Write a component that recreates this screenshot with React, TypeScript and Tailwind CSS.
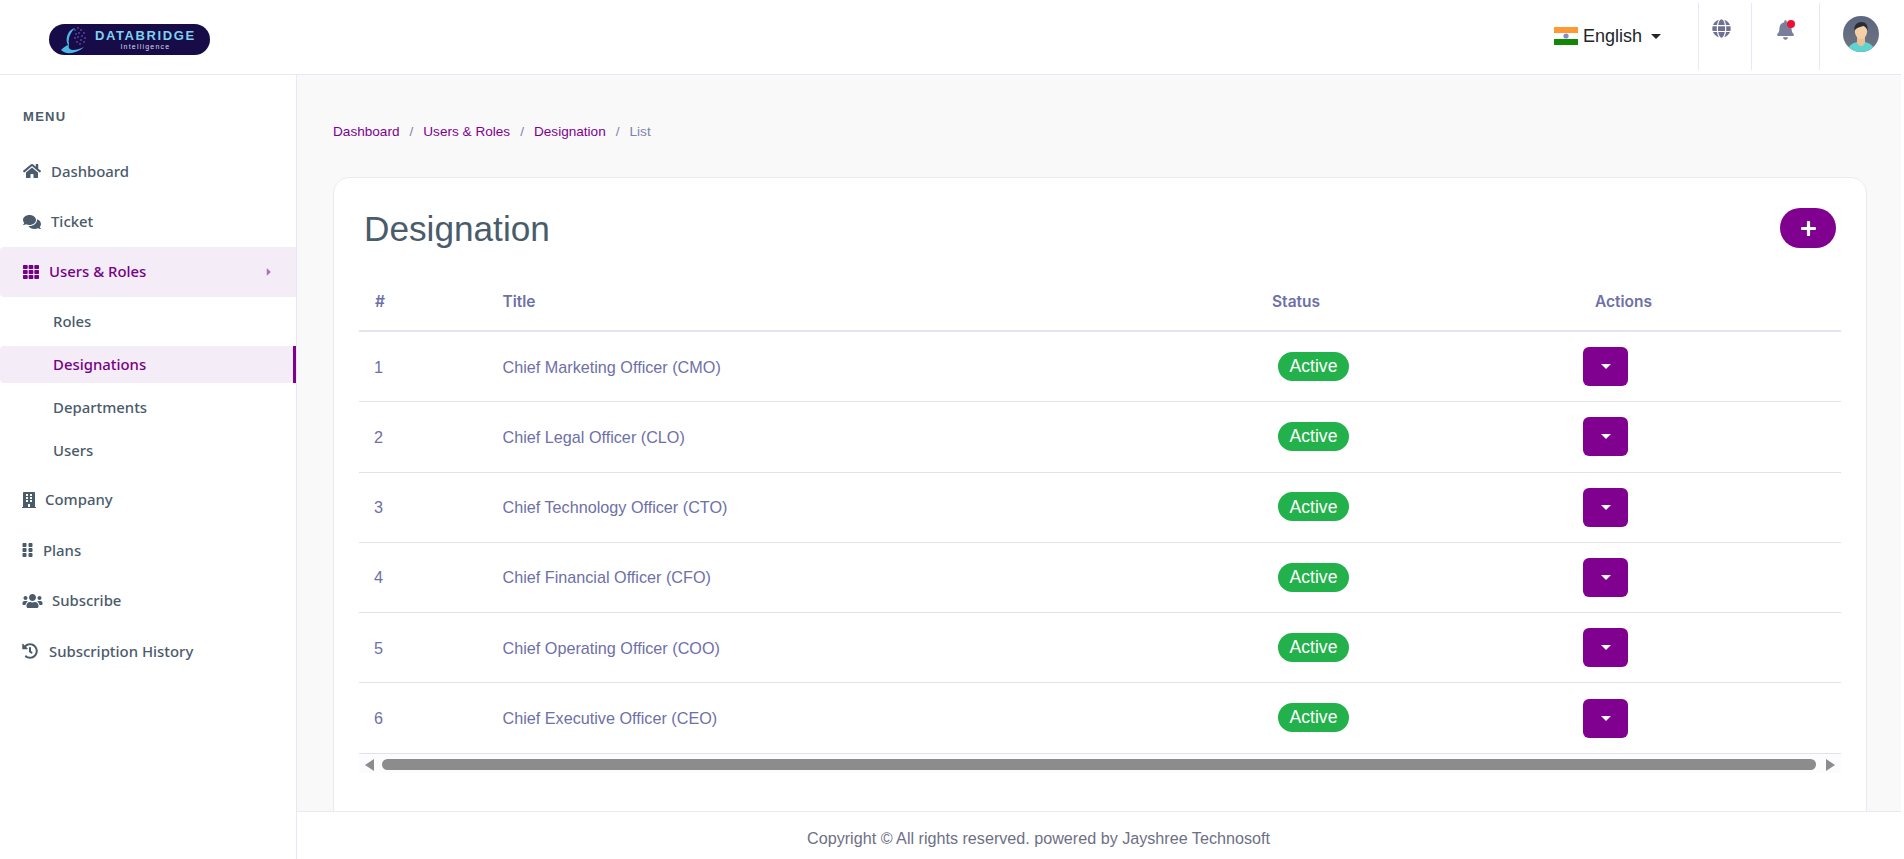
import React from "react";
import { FaHome, FaComments, FaTh, FaBuilding, FaGripVertical, FaUsers, FaHistory, FaGlobe, FaBell, FaPlus, FaCaretRight } from "react-icons/fa";

const rows = [
  "Chief Marketing Officer (CMO)",
  "Chief Legal Officer (CLO)",
  "Chief Technology Officer (CTO)",
  "Chief Financial Officer (CFO)",
  "Chief Operating Officer (COO)",
  "Chief Executive Officer (CEO)",
];

function Logo() {
  return (
    <div className="relative mt-[24px] flex h-[31px] w-[161px] items-center rounded-full bg-[#170c47]">
      <svg viewBox="0 0 30 31" className="ml-[11px] h-[31px] w-[30px] shrink-0">
        <path d="M1 26c4 5 16 4 23-3-6 3-12 4-14 2-2-1-1-4-1-6-1-1 0-3 0-5 1-4 3-7 6-10-4 1-7 4-8 9-1 3 0 6 1 8-3 1-5 3-7 5z" fill="#4fb6e8" />
        <g fill="#7f6fd8">
          <circle cx="15" cy="6" r=".8" /><circle cx="18" cy="4" r=".8" /><circle cx="21" cy="6" r=".8" /><circle cx="24" cy="9" r=".8" />
          <circle cx="16" cy="10" r=".8" /><circle cx="19" cy="9" r=".8" /><circle cx="22" cy="12" r=".8" /><circle cx="25" cy="14" r=".8" />
          <circle cx="15" cy="14" r=".8" /><circle cx="18" cy="13" r=".8" /><circle cx="21" cy="16" r=".8" /><circle cx="24" cy="18" r=".8" />
          <circle cx="17" cy="18" r=".8" /><circle cx="20" cy="20" r=".8" />
        </g>
      </svg>
      <div className="ml-[5px] flex flex-col items-center font-['Liberation_Sans',sans-serif] leading-none">
        <span className="text-[13px] font-bold leading-[13px] tracking-[1.6px] text-[#7dd3f0]">DATABRIDGE</span>
        <span className="mt-[1px] text-[7px] leading-[8px] tracking-[1.2px] text-[#d8d8f0]">Intelligence</span>
      </div>
    </div>
  );
}

function Flag() {
  return (
    <svg viewBox="0 0 24 18" className="h-[18px] w-[24px]">
      <rect width="24" height="6" fill="#ff9933" />
      <rect y="6" width="24" height="6" fill="#ffffff" />
      <rect y="12" width="24" height="6" fill="#138808" />
      <circle cx="12" cy="9" r="2.6" fill="#8a8ac8" />
    </svg>
  );
}

function Avatar() {
  return (
    <svg viewBox="0 0 36 36" className="h-[36px] w-[36px]">
      <defs>
        <clipPath id="av"><circle cx="18" cy="18" r="18" /></clipPath>
        <linearGradient id="avg" x1="0" y1="0" x2="0" y2="1">
          <stop offset="0" stopColor="#5c6880" />
          <stop offset="1" stopColor="#6f7480" />
        </linearGradient>
      </defs>
      <g clipPath="url(#av)">
        <rect width="36" height="36" fill="url(#avg)" />
        <path d="M4 36c1-7 6-9 10-10h8c4 1 9 3 10 10z" fill="#5fd3cf" />
        <path d="M14 21h8v5c0 2-2 4-4 4s-4-2-4-4z" fill="#eec09a" />
        <ellipse cx="18" cy="15" rx="6.2" ry="8" fill="#f5cfa8" />
        <path d="M11.500 15c-1-6 3-9 7-9s7 3 6 9c-1-3-2-4-4-5-3 1-7 1-9 5z" fill="#2b2b33" />
      </g>
    </svg>
  );
}

function Item({ icon, label, gap, active }: { icon: React.ReactNode; label: string; gap: string; active?: boolean }) {
  return (
    <div className={active ? "flex h-[50px] items-center rounded-l-[4px] bg-[#f4ecf6] pl-[23px] pr-[24px] text-[#750085]" : "flex h-[50.4px] items-center pl-[23px] text-[#4a5b6b]"}>
      {icon}
      <span className={gap + " pb-[1px]"}>{label}</span>
      {active && <FaCaretRight className="ml-auto h-[12px] w-[6px] text-[#b26ec4]" />}
    </div>
  );
}

function Sidebar() {
  return (
    <aside className="w-[297px] shrink-0 border-r border-[#e9e6f5] bg-white font-['Noto_Sans',sans-serif] text-[14.900px] font-medium leading-[20px]">
      <div className="flex h-[71px] items-end pb-[21px] pl-[23px] font-['Liberation_Sans',sans-serif] text-[13px] font-bold leading-[16px] tracking-[1.3px] text-[#4a5b6b]">MENU</div>
      <Item icon={<FaHome className="h-[18px] w-[18px]" />} label="Dashboard" gap="ml-[10px]" />
      <Item icon={<FaComments className="h-[18px] w-[18px]" />} label="Ticket" gap="ml-[10px]" />
      <Item icon={<FaTh className="h-[16px] w-[16px]" />} label="Users & Roles" gap="ml-[10px]" active />
      <div className="flex flex-col gap-[6px] pb-[6px] pt-[6px]">
        <div className="flex h-[37px] items-center pb-[1px] pl-[53px] text-[#4a5b6b]">Roles</div>
        <div className="flex h-[37px] items-center rounded-l-[4px] border-r-[3px] border-[#800090] bg-[#f4ecf6] pb-[1px] pl-[53px] text-[#750085]">Designations</div>
        <div className="flex h-[37px] items-center pb-[1px] pl-[53px] text-[#4a5b6b]">Departments</div>
        <div className="flex h-[37px] items-center pb-[1px] pl-[53px] text-[#4a5b6b]">Users</div>
      </div>
      <Item icon={<FaBuilding className="-ml-[1px] h-[16px] w-[14px]" />} label="Company" gap="ml-[9px]" />
      <Item icon={<FaGripVertical className="-ml-[1px] h-[16px] w-[11px]" />} label="Plans" gap="ml-[10px]" />
      <Item icon={<FaUsers className="-ml-[1px] h-[16px] w-[21px]" />} label="Subscribe" gap="ml-[9px]" />
      <Item icon={<FaHistory className="-ml-[1px] h-[16px] w-[16px]" />} label="Subscription History" gap="ml-[11px]" />
    </aside>
  );
}

function Caret({ className }: { className: string }) {
  return <span className={"inline-block h-0 w-0 border-x-[5px] border-t-[5px] border-x-transparent " + className} />;
}

export default function App() {
  return (
    <div className="h-[859px] w-[1904px] overflow-hidden bg-white font-['Liberation_Sans',sans-serif]">
      <div className="flex h-[859px] w-[1901px] flex-col">
        <header className="flex h-[75px] shrink-0 items-start border-b border-[#e9e6f5] bg-white">
          <div className="pl-[49px]"><Logo /></div>
          <div className="ml-auto mt-[27px] flex h-[18px] items-center pr-[37px] text-[18px] text-[#212529]">
            <Flag />
            <span className="ml-[5px] leading-[18px]">English</span>
            <Caret className="ml-[9px] border-t-[#212529]" />
          </div>
          <div className="mt-[3px] flex h-[67px] w-[53px] justify-center border-l border-[#e9e6f5] pr-[8px] pt-[16px] text-[#6e7191]"><FaGlobe className="h-[19px] w-[19px]" /></div>
          <div className="mt-[3px] flex h-[67px] w-[68px] justify-center border-l border-[#e9e6f5] pt-[17px]">
            <div className="relative mr-[1px] h-[20px] w-[17px] text-[#7b7d9c]">
              <FaBell className="h-[20px] w-[17px]" />
              <span className="absolute -right-[1px] top-[0px] h-[8px] w-[8px] rounded-full bg-[#ec1034]" />
            </div>
          </div>
          <div className="mt-[3px] h-[67px] w-[82px] border-l border-[#e9e6f5] pl-[23px] pt-[13px]"><Avatar /></div>
        </header>

        <div className="flex min-h-0 flex-1">
          <Sidebar />
          <main className="flex min-w-0 flex-1 flex-col">
            <div className="min-h-0 flex-1 overflow-hidden bg-[#f9f9fa] pl-[36px] pr-[34px] pt-[48px]">
              <nav className="flex h-[18px] items-center text-[13.600px] leading-[18px] text-[#800090]">
                <span>Dashboard</span><span className="mx-[10px] text-[#7f81ae]">/</span>
                <span>Users &amp; Roles</span><span className="mx-[10px] text-[#7f81ae]">/</span>
                <span>Designation</span><span className="mx-[10px] text-[#7f81ae]">/</span>
                <span className="text-[#7f81ae]">List</span>
              </nav>
              <section className="mt-[36px] h-[760px] rounded-[16px] border border-[#e9ecf1] bg-white px-[25px] pt-[30px]">
                <div className="flex h-[42px] items-center justify-between pl-[5px] pr-[5px]">
                  <h1 className="text-[35.200px] font-normal leading-[42px] text-[#495c6c]">Designation</h1>
                  <button className="-mt-[2px] flex h-[40px] w-[56px] items-center justify-center rounded-full bg-[#800090] text-white"><FaPlus className="h-[17px] w-[17px]" /></button>
                </div>
                <table className="mt-[12px] w-[1482px] table-fixed border-separate border-spacing-0 text-[16.200px] text-[#6e70a8]">
                  <colgroup>
                    <col className="w-[143px]" /><col className="w-[755px]" /><col className="w-[320px]" /><col />
                  </colgroup>
                  <thead>
                    <tr className="font-['Inter',sans-serif] text-[15.500px] font-semibold">
                      <th className="h-[70px] border-b-2 border-[#e4e3f0] pl-[16px] pt-[12px] text-left font-semibold">#</th>
                      <th className="border-b-2 border-[#e4e3f0] pl-[0.5px] pt-[12px] text-left font-semibold">Title</th>
                      <th className="border-b-2 border-[#e4e3f0] pl-[15px] pt-[12px] text-left font-semibold">Status</th>
                      <th className="border-b-2 border-[#e4e3f0] pl-[18px] pt-[12px] text-left font-semibold">Actions</th>
                    </tr>
                  </thead>
                  <tbody>
                    {rows.map((t, i) => (
                      <tr key={t}>
                        <td className="h-[70.300px] border-b border-[#e2e2ea] pl-[15px]">{i + 1}</td>
                        <td className="border-b border-[#e2e2ea] pl-[0.5px]">{t}</td>
                        <td className="border-b border-[#e2e2ea] pb-[1px] pl-[21px]">
                          <span className="inline-flex h-[29px] w-[71px] items-center justify-center rounded-full bg-[#22b14a] text-[17.600px] text-white">Active</span>
                        </td>
                        <td className="border-b border-[#e2e2ea] pl-[6px]">
                          <button className="flex h-[39px] w-[45px] items-center justify-center rounded-[6px] bg-[#800090]"><Caret className="border-t-white" /></button>
                        </td>
                      </tr>
                    ))}
                  </tbody>
                </table>
                <div className="flex h-[19px] w-[1482px] items-start bg-[#fcfbfd] pt-[5px]">
                  <span className="ml-[6px] h-0 w-0 border-y-[6px] border-r-[9px] border-y-transparent border-r-[#8c8c8c]" />
                  <span className="ml-[8px] h-[11px] w-[1434px] rounded-full bg-[#8c8c8c]" />
                  <span className="ml-[10px] h-0 w-0 border-y-[6px] border-l-[9px] border-y-transparent border-l-[#8c8c8c]" />
                </div>
              </section>
            </div>
            <footer className="flex h-[48px] shrink-0 items-center justify-center border-t border-[#e9e9ef] bg-white pr-[121px] pt-[6px] text-[16.150px] text-[#6d7085]">
              Copyright © All rights reserved. powered by Jayshree Technosoft
            </footer>
          </main>
        </div>
      </div>
    </div>
  );
}
